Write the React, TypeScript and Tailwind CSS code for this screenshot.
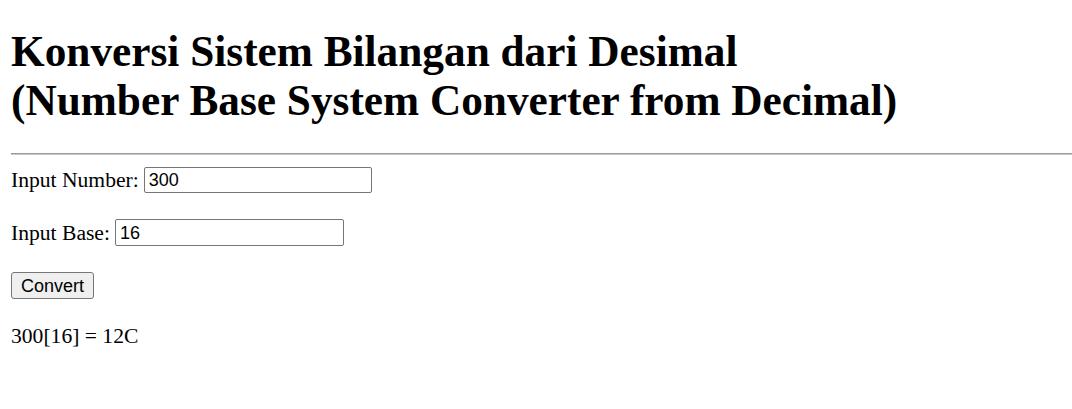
export default function App() {
  return (
    <div className="min-h-[409px] w-[1072px] bg-white text-black pl-[11px] font-['Liberation_Serif','Times_New_Roman',serif]">
      <h1 className="pt-[27px] text-[43.3px] leading-[49px] font-bold m-0">
        Konversi Sistem Bilangan dari Desimal
        <br />
        (Number Base System Converter from Decimal)
      </h1>
      <div className="mt-[28px] h-[2px] border-t border-b border-t-[#9a9a9a] border-b-[#c8c8c8]" />
      <div className="mt-[12px] flex h-[26px] items-center gap-[5px] text-[21.6px] leading-[24px]">
        <span>Input Number:</span>
        <div className="flex h-[26px] w-[228px] items-center rounded-[2px] border border-[#767676] pl-[4px] font-['Liberation_Sans',Arial,sans-serif] text-[18px]">
          300
        </div>
      </div>
      <div className="mt-[26px] flex h-[27px] items-center gap-[5px] text-[21.6px] leading-[24px]">
        <span>Input Base:</span>
        <div className="flex h-[27px] w-[229px] items-center rounded-[2px] border border-[#767676] pl-[4px] font-['Liberation_Sans',Arial,sans-serif] text-[18px]">
          16
        </div>
      </div>
      <div className="mt-[26px] flex">
        <button className="flex h-[27px] w-[83px] items-center justify-center rounded-[3px] border border-[#767676] bg-[#efefef] font-['Liberation_Sans',Arial,sans-serif] text-[18px] leading-[20px]">
          Convert
        </button>
      </div>
      <div className="mt-[24px] text-[21.6px] leading-[26px]">300[16] = 12C</div>
    </div>
  );
}
